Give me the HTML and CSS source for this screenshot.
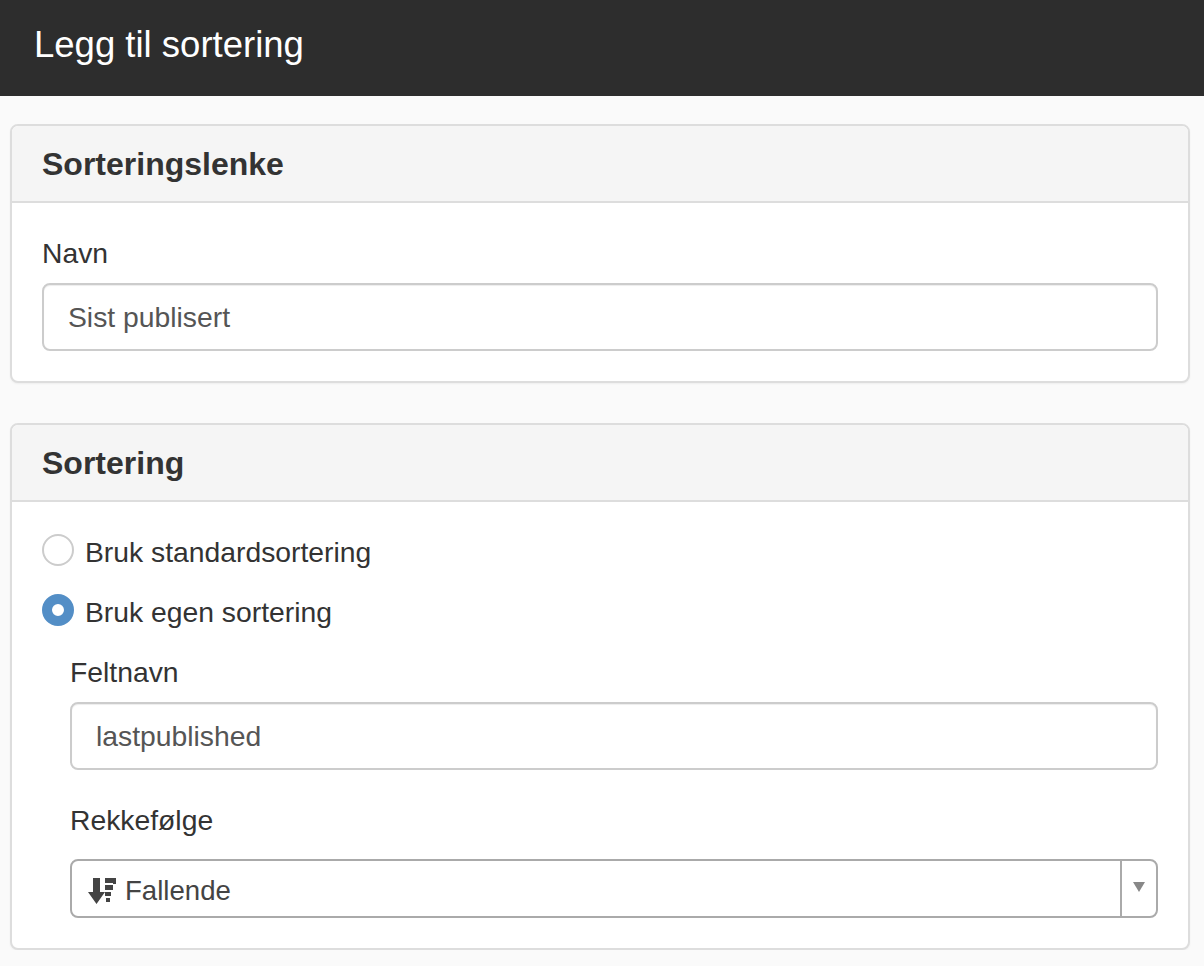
FILE: index.html
```html
<!DOCTYPE html>
<html lang="nb">
  <head>
    <meta charset="UTF-8" />
    <meta name="viewport" content="width=device-width, initial-scale=1.0" />
    <title>Legg til sortering</title>
    <link rel="stylesheet" href="styles.css">
  </head>
  <body>
    <header class="topbar">
      <h1>Legg til sortering</h1>
    </header>

    <main class="content">
      <section class="panel">
        <h2 class="panel-heading">Sorteringslenke</h2>
        <div class="panel-body">
          <label class="field-label">Navn</label>
          <div class="text-input">Sist publisert</div>
        </div>
      </section>

      <section class="panel">
        <h2 class="panel-heading">Sortering</h2>
        <div class="panel-body">
          <div class="radio-row">
            <span class="radio"></span>
            <span>Bruk standardsortering</span>
          </div>
          <div class="radio-row">
            <span class="radio radio-on"></span>
            <span>Bruk egen sortering</span>
          </div>

          <div class="sub-fields">
            <label class="field-label">Feltnavn</label>
            <div class="text-input">lastpublished</div>

            <label class="field-label field-gap">Rekkefølge</label>
            <div class="select">
              <div class="select-value">
                <svg class="sort-icon" viewBox="0 0 28 28" width="28" height="28" aria-hidden="true">
                  <path d="M5 1h7v14h5L8.500 27 0 15h5z" fill="#444444" />
                  <path d="M17 1h11v6h-3V6h-8zM17 8h8v5h-8zM17 15h6v4h-6zM18 21h4v4h-4z" fill="#444444" />
                </svg>
                <span>Fallende</span>
              </div>
              <div class="select-arrow"></div>
            </div>
          </div>
        </div>
      </section>
    </main>
  </body>
</html>
```

FILE: styles.css
```css
* {
  box-sizing: border-box;
  margin: 0;
  padding: 0;
}

body {
  background-color: #fafafa;
  color: #333333;
  font-family: "Liberation Sans", Arial, sans-serif;
  font-size: 28.3px;
  overflow: hidden;
}

.topbar {
  display: flex;
  align-items: center;
  height: 96px;
  padding: 0 35px 6px 34px;
  background-color: #2d2d2d;
  color: #ffffff;
}

.topbar h1 {
  font-size: 36.5px;
  font-weight: normal;
}

.content {
  display: flex;
  flex-direction: column;
  gap: 40px;
  padding: 28px 14px 0 10px;
}

.panel {
  background-color: #ffffff;
  border: 2px solid #dddddd;
  border-radius: 8px;
  box-shadow: 0 1px 2px rgba(0, 0, 0, 0.05);
}

.panel-heading {
  height: 77px;
  padding: 0 30px;
  line-height: 77px;
  font-size: 32px;
  font-weight: bold;
  background-color: #f5f5f5;
  border-bottom: 2px solid #dddddd;
  border-radius: 6px 6px 0 0;
}

.panel-body {
  padding: 30px;
}

.field-label {
  display: block;
  height: 40px;
  line-height: 41px;
  margin-bottom: 10px;
}

.field-gap {
  margin-top: 30px;
  margin-bottom: 19px;
}

.text-input {
  height: 68px;
  padding: 0 24px;
  line-height: 65px;
  color: #555555;
  border: 2px solid #cccccc;
  border-radius: 8px;
  box-shadow: inset 0 1px 1px rgba(0, 0, 0, 0.075);
}

.radio-row {
  display: flex;
  align-items: center;
  gap: 11px;
  height: 40px;
  margin-bottom: 20px;
}

.radio {
  align-self: flex-start;
  width: 32px;
  height: 32px;
  margin-top: 2px;
  border: 2px solid #cccccc;
  border-radius: 50%;
  background-color: #ffffff;
}

.radio-on {
  border: 10px solid #538ec6;
}

.sub-fields {
  padding-left: 28px;
}

.select {
  display: flex;
  height: 59px;
  border: 2px solid #aaaaaa;
  border-radius: 8px;
}

.select-value {
  flex: 1;
  display: flex;
  align-items: center;
  gap: 9px;
  padding: 5px 0 0 16px;
  border-right: 2px solid #aaaaaa;
  color: #444444;
  font-size: 27.6px;
}

.select-arrow {
  display: flex;
  align-items: center;
  justify-content: center;
  width: 34px;
  padding-bottom: 3px;
}

.select-arrow::after {
  content: "";
  border-left: 6px solid transparent;
  border-right: 6px solid transparent;
  border-top: 10px solid #888888;
}
```
